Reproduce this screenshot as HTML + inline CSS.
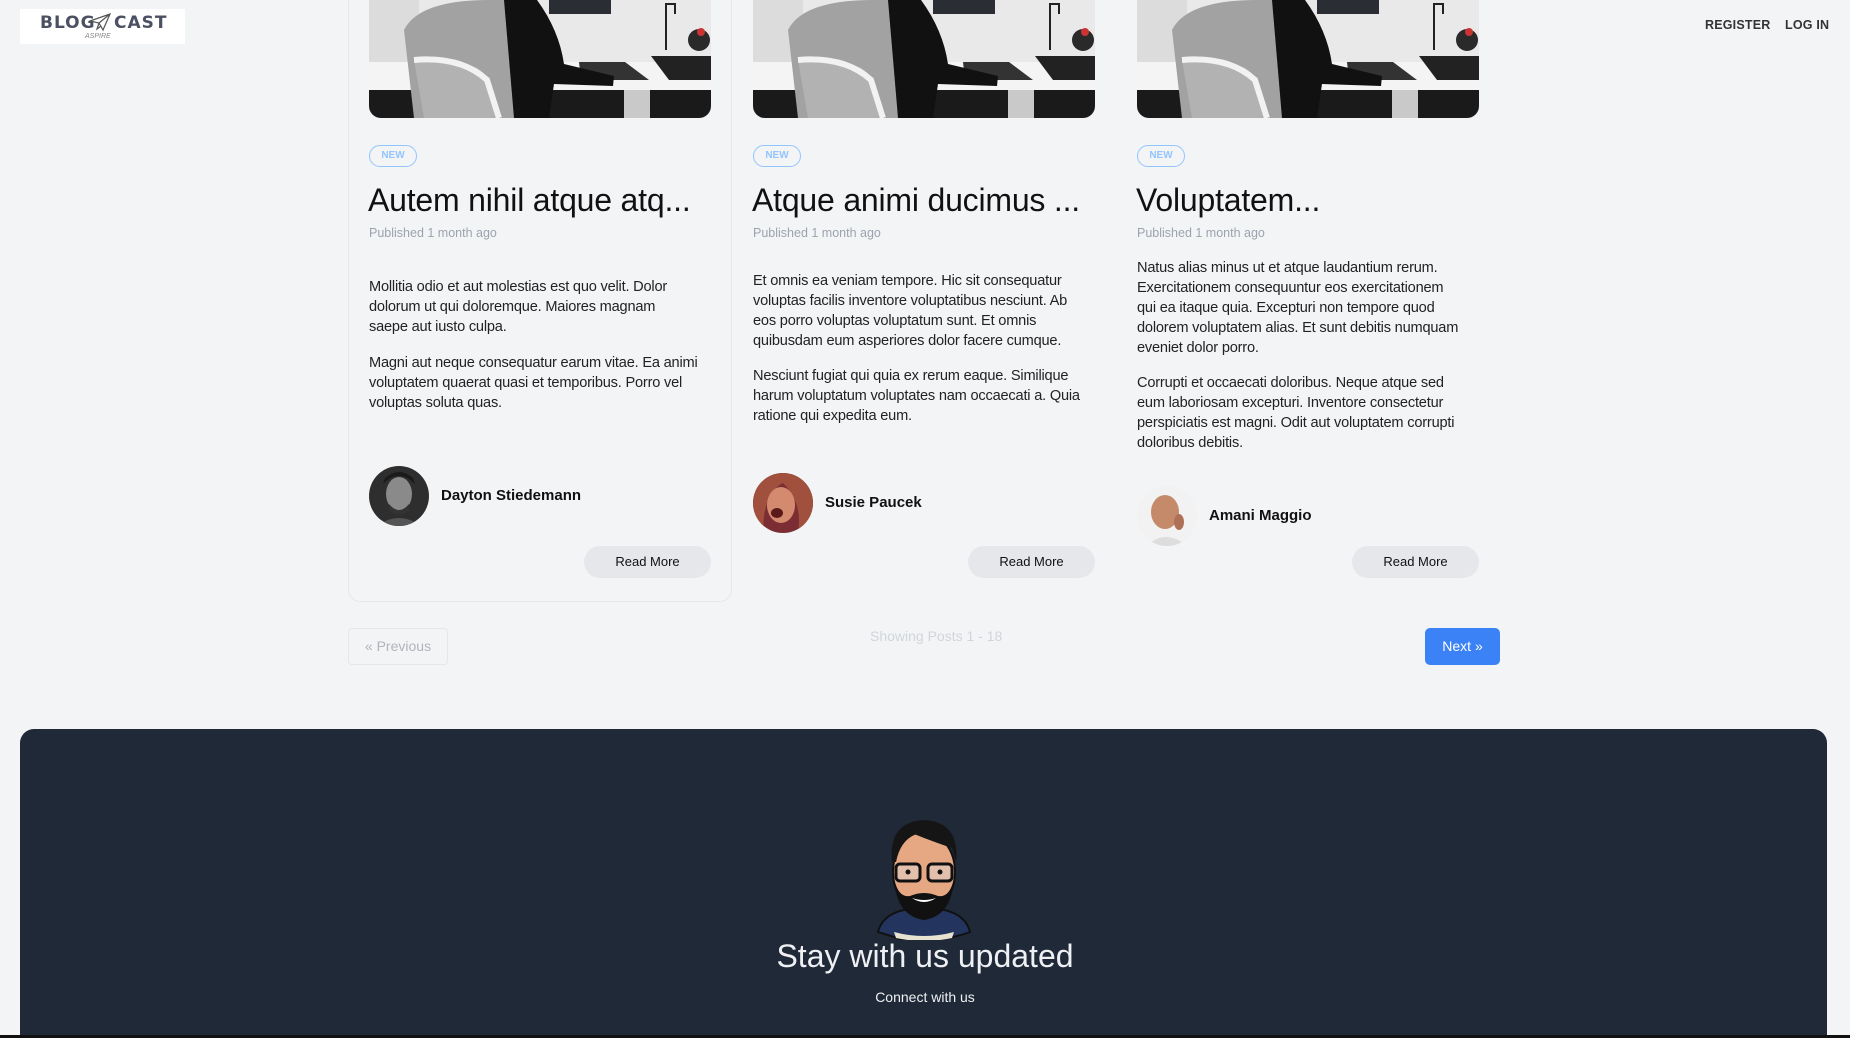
<!DOCTYPE html>
<html><head><meta charset="utf-8"><style>
*{margin:0;padding:0;box-sizing:border-box}
body{width:1850px;height:1038px;overflow:hidden;background:#f3f4f6;font-family:"Liberation Sans",sans-serif;position:relative;color:#111}
.a{position:absolute}
.logo{left:20px;top:9px;width:165px;height:35px;background:#fff}
.nav{top:18px;font-size:12.5px;font-weight:bold;color:#333;letter-spacing:.2px}
.img{width:342px;height:118px;top:0;border-radius:0 0 12px 12px;overflow:hidden}
.badge{top:145px;width:48px;height:22px;border:1.5px solid #93c5fd;border-radius:12px;color:#93c5fd;font-size:10px;font-weight:bold;text-align:center;line-height:19px}
.title{top:182px;font-size:32px;white-space:nowrap;color:#111;letter-spacing:-.2px}
.pub{top:226px;font-size:12.5px;color:#9ca3af}
.p{font-size:14.6px;line-height:20px;color:#222;white-space:nowrap;letter-spacing:-.2px}
.av{width:60px;height:60px;border-radius:50%;overflow:hidden}
.name{font-size:15px;font-weight:bold}
.rm{width:127px;height:32px;border-radius:16px;background:#e5e7eb;font-size:13px;text-align:center;line-height:32px;top:546px}
</style></head><body>
<div class="a logo">
<div class="a" style="left:20px;top:4px;font-size:17px;font-weight:900;color:#4b5063;letter-spacing:1px;font-family:'DejaVu Sans',sans-serif">BLOG</div>
<svg class="a" style="left:69px;top:3px" width="22" height="20" viewBox="0 0 22 20"><path d="M1 9 L21 2 L14 18 L10 11 Z M10 11 L21 2 M10 11 L8 17 L12 14" fill="none" stroke="#555" stroke-width="1.2"/></svg>
<div class="a" style="left:94px;top:4px;font-size:17px;font-weight:900;color:#4b5063;letter-spacing:1px;font-family:'DejaVu Sans',sans-serif">CAST</div>
<div class="a" style="left:65px;top:24px;font-size:7px;color:#888;font-style:italic">ASPIRE</div>
</div>
<div class="a nav" style="left:1705px">REGISTER</div>
<div class="a nav" style="left:1785px">LOG IN</div>

<div class="a" style="left:348px;top:-20px;width:384px;height:622px;border:1px solid #e5e7eb;border-radius:12px"></div>

<svg width="0" height="0" style="position:absolute"><defs><g id="scene">
<rect width="342" height="118" fill="#e9e9e9"/>
<rect x="0" y="0" width="50" height="118" fill="#dcdcdc"/>
<rect x="180" y="0" width="62" height="14" fill="#2a2d33"/>
<rect x="0" y="62" width="342" height="28" fill="#f4f4f4"/>
<rect x="0" y="90" width="342" height="28" fill="#1a1a1a"/>
<rect x="255" y="90" width="26" height="28" fill="#c9c9c9"/>
<path d="M282 56 L342 56 L342 80 L300 80 Z" fill="#222"/>
<path d="M297 50 L297 4 L306 4 L306 14" fill="none" stroke="#222" stroke-width="2"/>
<circle cx="330" cy="40" r="11" fill="#2a2a2a"/><circle cx="332" cy="32" r="4" fill="#c33"/>
<path d="M210 62 L256 62 L280 80 L212 80 Z" fill="#333"/>
<path d="M35 30 Q50 0 120 0 L145 0 L150 118 L45 118 Z" fill="#a2a2a2"/>
<path d="M135 0 L168 0 Q190 30 195 64 L245 76 L244 86 L185 84 L180 118 L145 118 Z" fill="#111"/>
<path d="M45 60 Q85 55 112 70 L128 118 L55 118 Z" fill="#b2b2b2"/>
<path d="M45 60 Q92 56 118 80 L130 118" fill="none" stroke="#f2f2f2" stroke-width="6"/>
</g></defs></svg>
<svg class="a img" style="left:369px" viewBox="0 0 342 118"><use href="#scene"/></svg>
<svg class="a img" style="left:753px" viewBox="0 0 342 118"><use href="#scene"/></svg>
<svg class="a img" style="left:1137px" viewBox="0 0 342 118"><use href="#scene"/></svg>

<div class="a badge" style="left:369px">NEW</div>
<div class="a badge" style="left:753px">NEW</div>
<div class="a badge" style="left:1137px">NEW</div>
<div class="a title" style="left:368px">Autem nihil atque atq...</div>
<div class="a title" style="left:752px">Atque animi ducimus ...</div>
<div class="a title" style="left:1136px">Voluptatem...</div>
<div class="a pub" style="left:369px">Published 1 month ago</div>
<div class="a pub" style="left:753px">Published 1 month ago</div>
<div class="a pub" style="left:1137px">Published 1 month ago</div>

<div class="a p" style="left:369px;top:277px">Mollitia odio et aut molestias est quo velit. Dolor<br>dolorum ut qui doloremque. Maiores magnam<br>saepe aut iusto culpa.</div>
<div class="a p" style="left:369px;top:353px">Magni aut neque consequatur earum vitae. Ea animi<br>voluptatem quaerat quasi et temporibus. Porro vel<br>voluptas soluta quas.</div>

<div class="a p" style="left:753px;top:271px">Et omnis ea veniam tempore. Hic sit consequatur<br>voluptas facilis inventore voluptatibus nesciunt. Ab<br>eos porro voluptas voluptatum sunt. Et omnis<br>quibusdam eum asperiores dolor facere cumque.</div>
<div class="a p" style="left:753px;top:366px">Nesciunt fugiat qui quia ex rerum eaque. Similique<br>harum voluptatum voluptates nam occaecati a. Quia<br>ratione qui expedita eum.</div>

<div class="a p" style="left:1137px;top:258px">Natus alias minus ut et atque laudantium rerum.<br>Exercitationem consequuntur eos exercitationem<br>qui ea itaque quia. Excepturi non tempore quod<br>dolorem voluptatem alias. Et sunt debitis numquam<br>eveniet dolor porro.</div>
<div class="a p" style="left:1137px;top:373px">Corrupti et occaecati doloribus. Neque atque sed<br>eum laboriosam excepturi. Inventore consectetur<br>perspiciatis est magni. Odit aut voluptatem corrupti<br>doloribus debitis.</div>

<svg class="a av" style="left:369px;top:466px" viewBox="0 0 60 60"><rect width="60" height="60" fill="#2e2e2e"/><ellipse cx="30" cy="28" rx="13" ry="17" fill="#8a8a8a"/><path d="M14 18 Q30 2 46 18 L44 12 Q30 0 16 12Z" fill="#1a1a1a"/><path d="M20 38 Q30 50 40 38 L40 44 Q30 54 20 44Z" fill="#333"/><path d="M8 60 Q30 44 52 60Z" fill="#555"/></svg>
<svg class="a av" style="left:753px;top:473px" viewBox="0 0 60 60"><rect width="60" height="60" fill="#7a2e34"/><path d="M0 0 L60 0 L60 60 L45 60 Q50 30 30 10 Q10 20 10 60 L0 60Z" fill="#a0503c"/><ellipse cx="28" cy="32" rx="14" ry="18" fill="#d38a6e"/><ellipse cx="24" cy="40" rx="6" ry="5" fill="#5a1a1a"/></svg>
<svg class="a av" style="left:1137px;top:486px" viewBox="0 0 60 60"><rect width="60" height="60" fill="#f2f2f2"/><ellipse cx="28" cy="26" rx="14" ry="17" fill="#c48a6a"/><path d="M10 60 Q28 42 50 60Z" fill="#ddd"/><ellipse cx="42" cy="36" rx="5" ry="8" fill="#b07058"/></svg>

<div class="a name" style="left:441px;top:487px">Dayton Stiedemann</div>
<div class="a name" style="left:825px;top:494px">Susie Paucek</div>
<div class="a name" style="left:1209px;top:507px">Amani Maggio</div>

<div class="a rm" style="left:584px">Read More</div>
<div class="a rm" style="left:968px">Read More</div>
<div class="a rm" style="left:1352px">Read More</div>

<div class="a" style="left:348px;top:628px;width:100px;height:37px;border:1px solid #e5e7eb;border-radius:4px;color:#b0b4bb;font-size:14px;text-align:center;line-height:35px">« Previous</div>
<div class="a" style="left:870px;top:628px;font-size:14px;color:#d1d5db">Showing Posts 1 - 18</div>
<div class="a" style="left:1425px;top:628px;width:75px;height:37px;background:#3b82f6;border-radius:5px;color:#fff;font-size:14px;text-align:center;line-height:37px">Next »</div>

<div class="a" style="left:20px;top:729px;width:1807px;height:309px;background:#1f2937;border-radius:14px 14px 0 0"></div>
<div class="a" style="left:0;top:1035px;width:1850px;height:3px;background:#111"></div>
<svg class="a" style="left:874px;top:812px" width="100" height="128" viewBox="0 0 100 128">
<path d="M4 120 Q10 96 50 96 Q90 96 96 120 Q70 130 30 128Z" fill="#23355e" stroke="#111" stroke-width="2"/>
<path d="M20 120 Q50 128 80 120 L78 126 Q50 132 22 126Z" fill="#e8e2d0"/>
<ellipse cx="50" cy="60" rx="31" ry="40" fill="#e5a882" stroke="#111" stroke-width="2"/>
<path d="M18 50 Q14 10 50 8 Q86 10 82 50 L78 36 Q60 30 40 22 Q26 30 22 50Z" fill="#151515"/>
<path d="M20 66 Q22 104 50 108 Q78 104 80 66 Q76 86 64 84 Q50 78 36 84 Q24 86 20 66Z" fill="#111"/>
<path d="M38 86 Q50 94 62 86 Q50 90 38 86Z" fill="#fff"/>
<rect x="22" y="52" width="24" height="17" rx="4" fill="#dfe4e8" fill-opacity=".4" stroke="#111" stroke-width="3"/>
<rect x="54" y="52" width="24" height="17" rx="4" fill="#dfe4e8" fill-opacity=".4" stroke="#111" stroke-width="3"/>
<circle cx="34" cy="60" r="2.5" fill="#111"/><circle cx="66" cy="60" r="2.5" fill="#111"/>
</svg>
<div class="a" style="left:0;width:1850px;top:938px;text-align:center;font-size:32px;color:#eef0f3">Stay with us updated</div>
<div class="a" style="left:0;width:1850px;top:989px;text-align:center;font-size:14px;color:#eef0f3">Connect with us</div>
</body></html>
